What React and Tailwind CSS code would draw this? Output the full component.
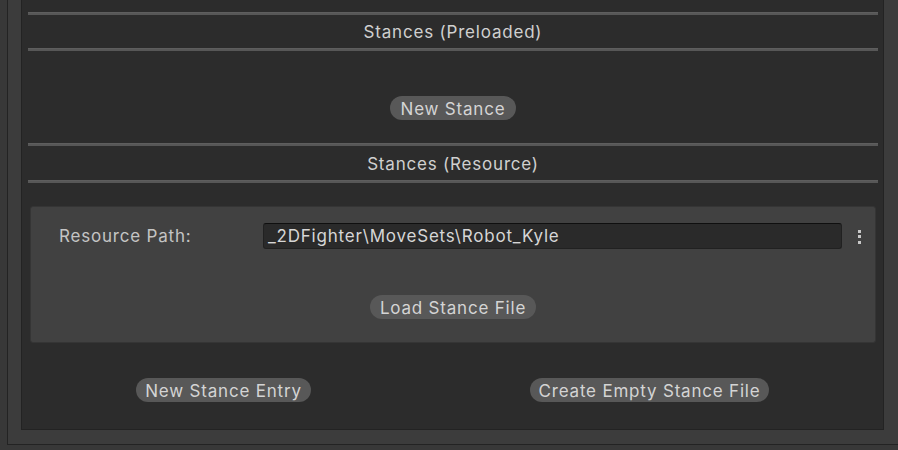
import React from "react";

const font = { fontFamily: "Inter, 'Noto Sans', sans-serif" };

function Line() {
  return <div className="h-[3px] bg-[#575757] border-t border-[#5e5e5e]" />;
}

function Btn({ children, w }) {
  return (
    <div className={`h-[24px] pt-[2px] rounded-full bg-[#585858] text-[#d4d4d4] text-[17px] tracking-[0.8px] leading-[22px] flex items-center justify-center ${w}`}>
      {children}
    </div>
  );
}

export default function App() {
  return (
    <div className="w-[898px] h-[450px] bg-[#383838] overflow-hidden" style={font}>
      <div className="ml-[7px] border-l border-b border-[#232323] bg-[#3c3c3c] pl-[13px] pr-[14px] pb-[14px]">
        <div className="h-[430px] border-l border-r border-b border-[#232323] bg-[#2c2c2c] pl-[6px] pr-[5px] pt-[12px]">
          <Line />
          <div className="h-[33px] pt-[2px] flex items-center justify-center text-[17px] tracking-[0.8px] text-[#d0d0d0]">Stances (Preloaded)</div>
          <Line />
          <div className="h-[92px] pt-[45px] flex justify-center">
            <Btn w="w-[126px]">New Stance</Btn>
          </div>
          <Line />
          <div className="h-[34px] pt-[3px] flex items-center justify-center text-[17px] tracking-[0.8px] text-[#d0d0d0]">Stances (Resource)</div>
          <Line />
          <div className="mt-[23px] mx-[2px] h-[137px] rounded-[3px] bg-[#414141] border border-[#353535] pt-[16px]">
            <div className="flex items-center h-[26px] pl-[28px]">
              <div className="w-[204px] pt-[2px] text-[17px] tracking-[0.8px] text-[#c4c4c4]">Resource Path:</div>
              <div className="w-[579px] h-[26px] rounded-[3px] bg-[#2a2a2a] border border-[#212121] border-t-[#0f0f0f] pl-[4px] pt-[2px] flex items-center text-[17px] tracking-[0.8px] text-[#d6d6d6]">
                _2DFighter\MoveSets\Robot_Kyle
              </div>
              <div className="ml-[16px] flex flex-col gap-[2.5px] pt-[1px]">
                <div className="w-[3px] h-[3px] bg-[#c8c8c8]" />
                <div className="w-[3px] h-[3px] bg-[#c8c8c8]" />
                <div className="w-[3px] h-[3px] bg-[#c8c8c8]" />
              </div>
            </div>
            <div className="mt-[46px] flex justify-center">
              <Btn w="w-[166px]">Load Stance File</Btn>
            </div>
          </div>
          <div className="mt-[35px] flex pl-[108px]">
            <Btn w="w-[175px]">New Stance Entry</Btn>
            <div className="w-[219px]" />
            <Btn w="w-[239px]">Create Empty Stance File</Btn>
          </div>
        </div>
      </div>
    </div>
  );
}
